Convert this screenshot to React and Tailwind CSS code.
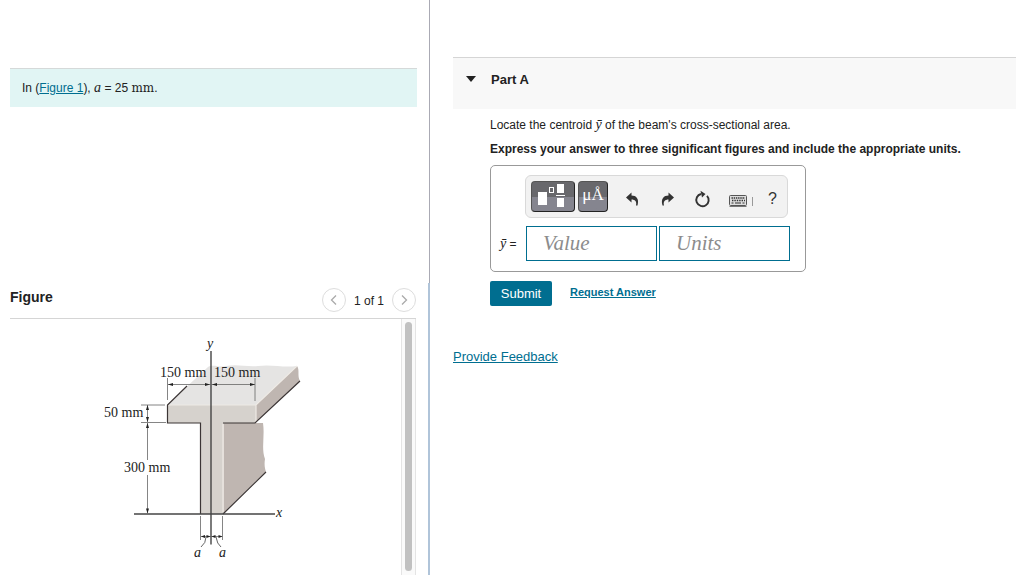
import React from "react";

const label = "fill-[#222] font-['Liberation_Serif',serif] text-[14px]";

function BeamFigure() {
  return (
    <svg
      viewBox="103 335 205 230"
      className="h-[230px] w-[205px] shrink-0"
      role="img"
      aria-label="T-shaped beam cross section with dimensions"
    >
      <path d="M167 405 L208 367 C214 364 219 368 226 366 C238 364 246 367 258 366 C272 364 283 368 297 366 L256 405 Z" fill="#e5e4e3" />
      <path d="M256 405 L297 366 C300 370 297 376 300 381 L255 423 Z" fill="#bfb6b1" />
      <path d="M223 423 H263 C265 436 261 448 265 459 C264 465 265 469 266 472 L223 514 Z" fill="#bfb6b1" />
      <path d="M167 405 H256 V423 H224 V514 H200 V423 H167 Z" fill="#d6d2cd" />
      <path d="M168 405 H256 L297 366 M256 405 V422 M223 424 V512" stroke="#eeeae5" strokeWidth="1.2" fill="none" />
      <path d="M187 386 L167.500 405 V423 H200.500 V514 M223 423 H255 L300 381 M223 514 L266 472" stroke="#3b3535" strokeWidth="1.2" fill="none" />
      <path d="M134 514 H275" stroke="#444" strokeWidth="1.4" />
      <path d="M211 351 V544.500" stroke="#444" strokeWidth="1.4" />
      <path
        d="M167.500 378 V400 M255 378 V401 M168 384.500 H255 M141 405 H165 M141 422.500 H166 M147.500 405 V422 M147.500 423 V460 M147.500 475 V513 M200.500 516 V540 M222.500 516 V540 M201 536.500 H222"
        stroke="#666"
        strokeWidth="0.8"
        fill="none"
      />
      <path
        d="M168 384.500 l5 -1.500 v3z M210 384.500 l-5 -1.500 v3z M212 384.500 l5 -1.500 v3z M255 384.500 l-5 -1.500 v3z M147.500 405 l-1.500 5 h3z M147.500 422 l-1.500 -5 h3z M147.500 423 l-1.500 5 h3z M147.500 513.500 l-1.500 -5 h3z M201 536.500 l4 -1.500 v3z M210.500 536.500 l-4 -1.500 v3z M211.500 536.500 l4 -1.500 v3z M222.500 536.500 l-4 -1.500 v3z"
        fill="#222"
      />
      <path d="M206 537 Q206 543 201 547 M216 537 Q217 544 221 547" stroke="#555" strokeWidth="0.9" fill="none" />
      <text x="160" y="377" className={label}>150 mm</text>
      <text x="214" y="377" className={label}>150 mm</text>
      <text x="104" y="417" className={label}>50 mm</text>
      <text x="124" y="472" className={label}>300 mm</text>
      <text x="207" y="348" className={label} fontStyle="italic">y</text>
      <text x="276" y="517" className={label} fontStyle="italic">x</text>
      <text x="194" y="557" className={label} fontStyle="italic">a</text>
      <text x="219" y="557" className={label} fontStyle="italic">a</text>
    </svg>
  );
}

function PageButton({ name, d }) {
  return (
    <button aria-label={name} className="flex size-6 items-center justify-center rounded-full border border-[#ddd] bg-white">
      <svg viewBox="0 0 12 12" className="size-3" fill="none" stroke="#aaa" strokeWidth="1.3">
        <path d={d} />
      </svg>
    </button>
  );
}

function Problem() {
  return (
    <section className="flex min-h-screen flex-col">
      <div className="h-[283px] shrink-0 border-r border-[#aaaab4] pl-[10px] pr-3 pt-[68px]">
        <div className="border-t border-[#d5d9d9] bg-[#e1f5f4] px-3 pb-[9px] pt-[9px] text-[12px] leading-5">
          In (<a href="#figure" className="text-[#006e90] underline">Figure 1</a>),{" "}
          <i className="font-['Liberation_Serif',serif] text-[14px]">a</i> = 25{" "}
          <span className="font-['DejaVu_Serif',serif] text-[12px]">mm</span>.
        </div>
      </div>
      <div id="figure" className="flex grow flex-col border-r-2 border-[#b0c4d9] pl-[10px] pr-3">
        <div className="flex h-9 items-center justify-between border-b border-[#d5d5d5]">
          <h2 className="pb-2 text-[14px] font-bold leading-4">Figure</h2>
          <div className="flex items-center gap-2 pb-[2px] text-[12px]">
            <PageButton name="Previous figure" d="M8 1.500 L3.500 6 L8 10.500" />
            <span className="pt-[2px]">1 of 1</span>
            <PageButton name="Next figure" d="M4 1.500 L8.500 6 L4 10.500" />
          </div>
        </div>
        <div className="flex grow">
          <div className="flex grow justify-center pt-4">
            <BeamFigure />
          </div>
          <div className="flex w-[15px] shrink-0 border-x border-[#e4e4e4] bg-[#fafafa] px-[3px] pb-1 pt-[3px]">
            <div className="w-full rounded-full bg-[#c1c1c1]" />
          </div>
        </div>
      </div>
    </section>
  );
}

const darkKey =
  "flex h-[31px] items-center justify-center rounded-[4px] border border-[#555] border-b-[#222] border-r-[#222] bg-linear-to-b from-[#68686c] from-50% to-[#85858f] to-50% text-white";

function Toolbar() {
  return (
    <div role="toolbar" aria-label="Math tools" className="flex h-[43px] items-center rounded-md border border-[#d9d9d9] bg-[#f2f2f2] pl-[5px] pr-[6px]">
      <button aria-label="Templates" className={`${darkKey} w-[44px]`}>
        <svg viewBox="0 0 32 26" className="h-[26px] w-8" fill="#fff">
          <rect x="1" y="8" width="9" height="13" />
          <rect x="12.500" y="3.500" width="4" height="5" fill="none" stroke="#fff" />
          <rect x="20" y="0" width="7" height="9" />
          <rect x="19" y="11" width="9" height="1" />
          <rect x="20" y="14" width="7" height="9" />
        </svg>
      </button>
      <button aria-label="Units symbols" className={`${darkKey} ml-[3px] w-[30px] pb-1 font-['Liberation_Serif',serif] text-[17px]`}>
        μÅ
      </button>
      <div className="flex grow items-center justify-between pl-4 pr-1 pt-[5px]">
        <div className="flex items-center gap-[19px]">
          <button aria-label="Undo">
            <svg viewBox="0 0 16 14" className="h-[14px] w-4" fill="#333">
              <path d="M2 5.500 L7.500 0.500 V3.500 C12 3.500 15.500 6.500 13.500 13.500 H12 C13 9.500 11 7.500 7.500 7.500 V10.500 Z" />
            </svg>
          </button>
          <button aria-label="Redo">
            <svg viewBox="0 0 16 14" className="h-[14px] w-4" fill="#333">
              <path d="M15 5.500 L9.500 0.500 V3.500 C5 3.500 1.500 6.500 3.500 13.500 H5 C4 9.500 6 7.500 9.500 7.500 V10.500 Z" />
            </svg>
          </button>
          <button aria-label="Reset">
            <svg viewBox="0 0 16 18" className="h-[18px] w-4" fill="none" stroke="#333" strokeWidth="1.900">
              <path d="M13 5.800 A6.200 6.200 0 1 1 7 4" />
              <path d="M6.500 0.800 L11.500 4 L8 7.500 Z" fill="#333" stroke="none" />
            </svg>
          </button>
          <div className="flex items-center gap-[5px] pt-1">
            <button aria-label="Keyboard">
              <svg viewBox="0 0 18 12" className="h-3 w-[18px]">
                <rect x="0.500" y="0.500" width="17" height="10" rx="1" fill="#ddd" stroke="#555" />
                <path d="M2.500 3 H16" stroke="#333" strokeWidth="1.400" strokeDasharray="1.400 0.800" />
                <path d="M3 5.500 H16" stroke="#333" strokeWidth="1.400" strokeDasharray="1.400 1" />
                <path d="M2.500 8 H4.500 M6 8 H12 M13.500 8 H15.500" stroke="#333" strokeWidth="1.200" />
                <path d="M0.500 11.500 H17.500" stroke="#777" />
              </svg>
            </button>
            <span className="h-[9px] w-px bg-[#999]" />
          </div>
        </div>
        <button aria-label="Help" className="text-[16px] leading-4 text-[#333]">?</button>
      </div>
    </div>
  );
}

const field =
  "h-[35px] w-[131px] border border-[#006e90] bg-white px-4 font-['Liberation_Serif',serif] text-[21px] italic placeholder:text-[#8c8c8c] outline-none";

function Answer() {
  return (
    <form onSubmit={(e) => e.preventDefault()}>
      <div className="w-[316px] rounded-[5px] border border-[#999] px-[9px] pb-[10px] pt-[9px]">
        <div className="ml-[25px] w-[263px]">
          <Toolbar />
        </div>
        <div className="mt-2 flex items-center">
          <label htmlFor="value" className="w-[26px] shrink-0 whitespace-nowrap text-[12px]">
            <i className="font-['Liberation_Serif',serif] text-[14px]">ȳ</i> =
          </label>
          <input id="value" placeholder="Value" className={field} />
          <input aria-label="Units" placeholder="Units" className={`${field} ml-[2px]`} />
        </div>
      </div>
      <div className="mt-[9px] flex gap-[18px]">
        <button type="submit" className="h-[25px] w-[62px] rounded-[2px] bg-[#006e90] text-[13px] font-medium text-white">
          Submit
        </button>
        <a href="#answer" className="pt-[3px] text-[11px] font-bold leading-4 text-[#006e90] underline">Request Answer</a>
      </div>
    </form>
  );
}

export default function App() {
  return (
    <main className="grid min-h-screen grid-cols-[215fr_293fr] bg-white font-['Liberation_Sans',Arial,sans-serif] text-[#222]">
      <Problem />
      <section className="pl-[23px] pt-[57px]">
        <header className="h-[52px] border-t border-[#d5d5d5] bg-[#f8f8f8] pl-[13px] pt-[14px]">
          <button className="flex items-center gap-[15px] text-[13px] font-bold leading-4">
            <svg viewBox="0 0 10 8" className="h-2 w-[10px]"><path d="M0 0 H10 L5 6 Z" fill="#222" /></svg>
            Part A
          </button>
        </header>
        <div className="pl-[37px] pt-2 text-[12px]">
          <p className="leading-4">
            Locate the centroid <i className="font-['Liberation_Serif',serif] text-[14px] leading-4">ȳ</i> of the beam's cross-sectional area.
          </p>
          <p className="mb-2 mt-2 font-bold leading-4">
            Express your answer to three significant figures and include the appropriate units.
          </p>
          <Answer />
        </div>
        <a href="#feedback" className="mt-[43px] inline-block text-[13px] leading-4 text-[#006e90] underline">Provide Feedback</a>
      </section>
    </main>
  );
}
